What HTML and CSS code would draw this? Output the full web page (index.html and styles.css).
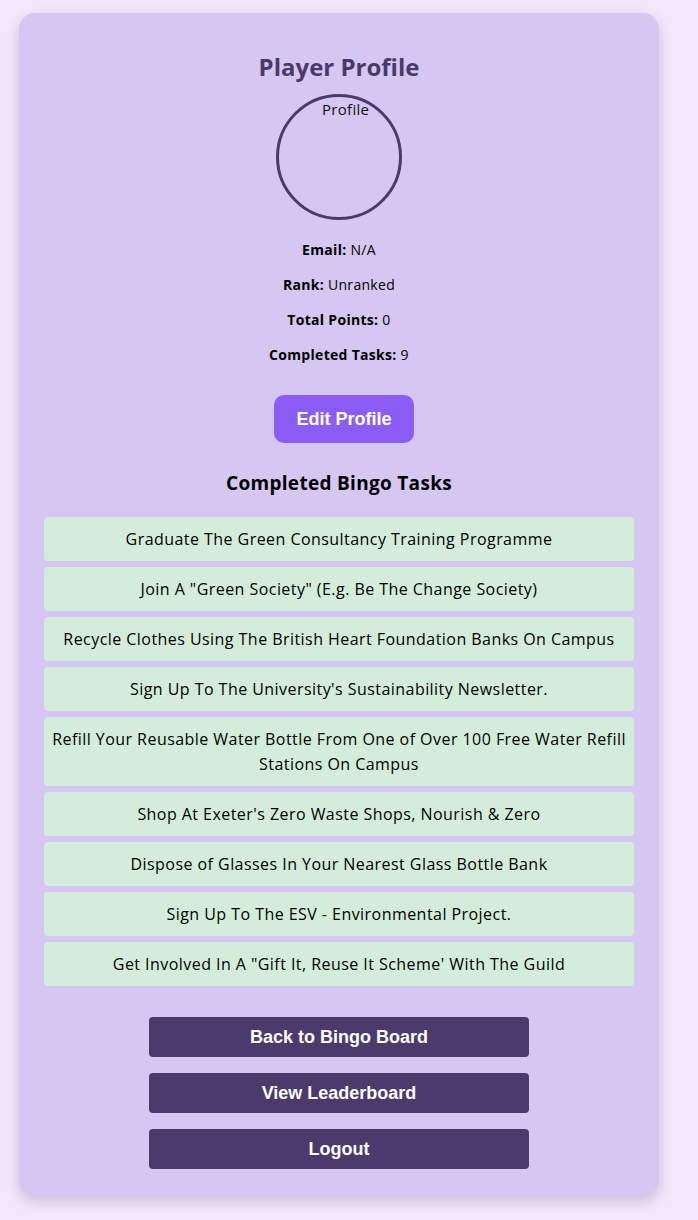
FILE: index.html
```html
<!DOCTYPE html>
<html lang="en">
<head>
<meta charset="utf-8">
<title>Player Profile</title>
<link rel="stylesheet" href="styles.css">
</head>
<body>
<div class="card">
  <h1 class="title">Player Profile</h1>
  <div class="avatar"><span class="avatar-alt">Profile</span></div>
  <div class="info">
    <p><strong>Email:</strong> N/A</p>
    <p><strong>Rank:</strong> Unranked</p>
    <p><strong>Total Points:</strong> 0</p>
    <p><strong>Completed Tasks:</strong> 9</p>
  </div>
  <button class="edit-btn">Edit Profile</button>
  <h2 class="subtitle">Completed Bingo Tasks</h2>
  <ul class="tasks">
    <li>Graduate The Green Consultancy Training Programme</li>
    <li>Join A "Green Society" (E.g. Be The Change Society)</li>
    <li>Recycle Clothes Using The British Heart Foundation Banks On Campus</li>
    <li>Sign Up To The University's Sustainability Newsletter.</li>
    <li>Refill Your Reusable Water Bottle From One of Over 100 Free Water Refill Stations On Campus</li>
    <li>Shop At Exeter's Zero Waste Shops, Nourish &amp; Zero</li>
    <li>Dispose of Glasses In Your Nearest Glass Bottle Bank</li>
    <li>Sign Up To The ESV - Environmental Project.</li>
    <li>Get Involved In A "Gift It, Reuse It Scheme' With The Guild</li>
  </ul>
  <div class="actions">
    <button class="nav-btn">Back to Bingo Board</button>
    <button class="nav-btn">View Leaderboard</button>
    <button class="nav-btn">Logout</button>
  </div>
</div>
</body>
</html>
```
FILE: styles.css
```css
html, body {
  margin: 0;
  padding: 0;
}
body {
  background: #f3e7fc;
  font-family: "Open Sans", "Noto Sans", sans-serif;
  color: #000;
  padding: 13px 0 25px;
}
.card {
  width: 640px;
  box-sizing: border-box;
  margin-left: 19px;
  background: #d5c6f2;
  border-radius: 16px;
  padding: 25px 25px 26px;
  box-shadow: 0 6px 14px rgba(60, 40, 90, 0.22);
  display: flex;
  flex-direction: column;
  align-items: center;
}
.title {
  margin: 11px 0 0;
  font-size: 24px;
  line-height: 36px;
  font-weight: 700;
  color: #4a3a6c;
}
.avatar {
  position: relative;
  width: 126px;
  height: 126px;
  box-sizing: border-box;
  border: 3px solid #4b3a6b;
  border-radius: 50%;
  margin-top: 9px;
}
.avatar-alt {
  position: absolute;
  left: 43px;
  top: 2px;
  font-size: 15px;
  line-height: 20px;
  letter-spacing: 0.3px;
  color: #111;
}
.info {
  margin-top: 19px;
  display: flex;
  flex-direction: column;
  align-items: center;
  gap: 14px;
}
.info p {
  margin: 0;
  font-size: 14px;
  line-height: 21px;
  letter-spacing: 0.3px;
}
.info strong {
  font-weight: 700;
}
.edit-btn {
  margin: 30px 0 0 10px;
  width: 140px;
  height: 48px;
  border: none;
  border-radius: 10px;
  background: #8b5cf6;
  color: #fff;
  font-family: "Liberation Sans", Arial, sans-serif;
  font-weight: 700;
  font-size: 18px;
}
.subtitle {
  margin: 26px 0 0;
  font-size: 19px;
  line-height: 28px;
  font-weight: 700;
  letter-spacing: 0.3px;
}
.tasks {
  list-style: none;
  margin: 20px 0 0;
  padding: 0;
  width: 100%;
  display: flex;
  flex-direction: column;
  gap: 6px;
}
.tasks li {
  background: #d4edda;
  border-radius: 4px;
  padding: 9.5px 4px;
  text-align: center;
  font-size: 16px;
  line-height: 25px;
  letter-spacing: 0.45px;
}
.actions {
  margin-top: 31px;
  display: flex;
  flex-direction: column;
  gap: 16px;
}
.nav-btn {
  width: 380px;
  height: 40px;
  border: none;
  border-radius: 4px;
  background: #4b3a6b;
  color: #fff;
  font-family: "Liberation Sans", Arial, sans-serif;
  font-weight: 700;
  font-size: 18px;
}
```
